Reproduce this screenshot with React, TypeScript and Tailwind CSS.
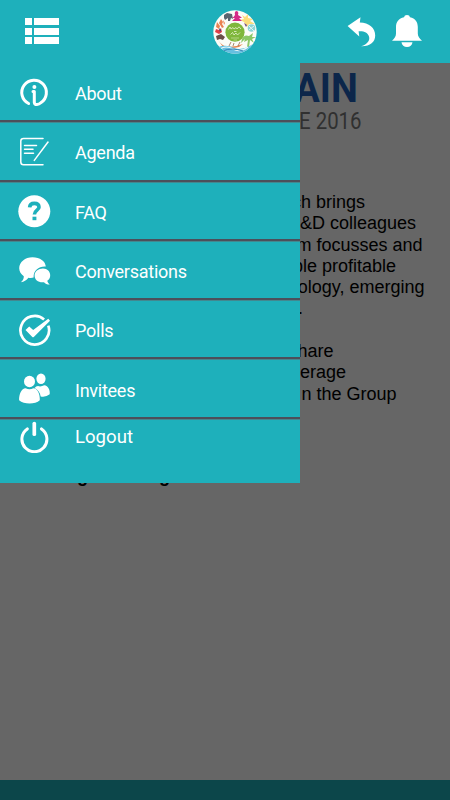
import type { ReactNode } from "react";

function Icon({ children }: { children: ReactNode }) {
  return (
    <svg viewBox="0 0 34 34" className="h-[34px] w-[34px] shrink-0 text-white" fill="currentColor" aria-hidden="true">
      {children}
    </svg>
  );
}

function AboutIcon() {
  return (
    <Icon>
      <path
        d="M11.6 27.5A12.3 12.3 0 1 1 23.8 26.8C21.8 28.8 17.8 29.7 17.3 26.5V15.4H16"
        fill="none"
        stroke="currentColor"
        strokeWidth="3"
        strokeLinecap="round"
        strokeLinejoin="round"
      />
      <circle cx="17.4" cy="11" r="2" />
    </Icon>
  );
}

function AgendaIcon() {
  return (
    <Icon>
      <g fill="none" stroke="currentColor" strokeWidth="1.5" strokeLinecap="round" strokeLinejoin="round">
        <path d="M26 3.4H6.5Q3.8 3.4 3.8 6.1V27Q3.8 29.8 6.5 29.8H26" />
        <path d="M7.5 10.4H19.5M7.5 14.3H16M7.5 18.2H16.5" />
        <path d="M31 7L17.3 25.4" />
      </g>
    </Icon>
  );
}

function FaqIcon() {
  return (
    <Icon>
      <circle cx="17.3" cy="17.2" r="16" />
      <path
        d="M12.6 13.3C12.8 10.2 15 9.4 17.3 9.4C20.2 9.4 22 10.8 22 13.2C22 16.2 17.4 16.2 17.4 20.5"
        fill="none"
        stroke="#1eb0bb"
        strokeWidth="3.6"
      />
      <rect x="15.5" y="22.7" width="3.9" height="3.5" fill="#1eb0bb" />
    </Icon>
  );
}

function ConversationsIcon() {
  return (
    <Icon>
      <path d="M15.5 3.2C23 3.2 28.4 7.2 28.8 12.5C22 12 16.4 16 16.6 23.6C14.8 24.3 12.8 24.1 11.4 23.8C9.5 26.5 7 27.8 3.8 28.2C5.9 26.4 6.9 24.5 6.8 22.2C4 20.4 2.2 17.6 2.2 14.3C2.2 8 8.2 3.2 15.5 3.2Z" />
      <path d="M26 14.4C30.4 14.4 33.2 17.4 33.2 21.2C33.2 23.7 32.2 25.6 30.3 26.8C30.5 28.4 31.5 29.5 32.8 30.6C30 30.5 28.2 29.5 27 28.2C21.6 28.9 17.6 26 17.6 21.5C17.6 17.4 21.2 14.4 26 14.4Z" />
    </Icon>
  );
}

function PollsIcon() {
  return (
    <Icon>
      <path
        d="M27.1 6.4A14.3 14.3 0 1 0 31.3 12.6"
        fill="none"
        stroke="currentColor"
        strokeWidth="2.7"
      />
      <path d="M8.5 16.9L12.2 13.5L16.2 16.9L31.3 5.7L33 7.8L16.8 23.9Q16 24.5 15.3 23.9Z" />
    </Icon>
  );
}

function InviteesIcon() {
  return (
    <Icon>
      <ellipse cx="24" cy="6.8" rx="4.6" ry="5.2" />
      <path d="M21 14.1Q24 15 27.2 13.3C31.3 13.8 33.3 18.4 32.7 22.2Q28.9 25.4 23.7 24.4C23.1 20.7 21 17.7 17.6 16C18.6 14.9 19.7 14.2 21 14.1Z" />
      <ellipse cx="12.5" cy="9.5" rx="5.5" ry="5.8" />
      <path d="M8.6 16.2Q12.5 18.3 16.4 16.2C20.6 16.5 23.1 21.7 22.8 28.2C18.2 32.6 7 32.6 2.1 28.2C2 21.7 4.5 16.5 8.6 16.2Z" />
    </Icon>
  );
}

function LogoutIcon() {
  return (
    <Icon>
      <g fill="none" stroke="currentColor" strokeLinecap="round">
        <path d="M10.3 9.9A12.5 12.5 0 1 0 24.5 9.9" strokeWidth="3" />
        <path d="M17.3 4.6V15.2" strokeWidth="3.7" />
      </g>
    </Icon>
  );
}

const menuItems = [
  { label: "About", icon: <AboutIcon /> },
  { label: "Agenda", icon: <AgendaIcon /> },
  { label: "FAQ", icon: <FaqIcon /> },
  { label: "Conversations", icon: <ConversationsIcon /> },
  { label: "Polls", icon: <PollsIcon /> },
  { label: "Invitees", icon: <InviteesIcon /> },
];

// `end` is the right edge of each line of copy
const lines = [
  { text: "ch brings", end: 365 },
  { text: "R&D colleagues", end: 416 },
  { text: "m focusses and", end: 422.5 },
  { text: "ble profitable", end: 396 },
  { text: "ology, emerging", end: 424.5 },
  { text: ".", end: 303 },
  { text: "", end: 300 },
  { text: "hare", end: 333.5 },
  { text: "erage", end: 346 },
  { text: "n the Group", end: 396.5 },
];

function Logo() {
  return (
    <svg viewBox="0 0 44 44" className="h-11 w-11" aria-hidden="true">
      <defs>
        <clipPath id="badge">
          <circle cx="22" cy="22" r="21.7" />
        </clipPath>
      </defs>
      <g clipPath="url(#badge)">
        <rect width="44" height="44" fill="#fbfcf7" />
        <path d="M29 5L32 7L35 4L35 8L40 9L37 11L42 14L36 14L34 17L31 12L27 10L31 9Z" fill="#fbdc7c" />
        <path d="M11 5L14 3L19 4L20 9L18 8L17 11L15 11L15 8L12 10L11 8Z" fill="#5a6570" />
        <path d="M19 8Q21 7 22 5Q21 1 24 1Q26 2 25 5Q27 6 29 8L26 8L29 11H19L22 8Z" fill="#d52a88" />
        <path d="M8 9L10 12L9 14L11 17L9 18L6 13ZM4 12L7 16L6 19L3 17ZM10 10L12 13L11 15Z" fill="#eb8251" />
        <path d="M3 19L6 20L8 18L9 22L6 24L2 22Z" fill="#df3f48" />
        <path d="M6 18L8 20L7 22Z" fill="#263e7d" />
        <path d="M3 26L8 24L12 27L10 30L7 29L4 30Z" fill="#694e47" />
        <path d="M31 13L34 15L33 17Z" fill="#6c4387" />
        <circle cx="38.5" cy="18" r="3.8" fill="#8dd4d6" />
        <path d="M36 16L41 21M36 20L41 16" stroke="#e2f6f4" />
        <path d="M29 29Q31 24 36 26L40 23L39 27L43 27L39 29L41 33L37 30L36 37H34L35 30L31 32L32 29L28 33Z" fill="#8bc766" />
        <path d="M5 30Q9 36 15 37Q23 37 30 34L26 37Q18 39 10 37Z" fill="#e48553" />
        <path d="M16 36L18 32M20 36L21 33M25 36L27 32" stroke="#93684a" strokeWidth=".8" />
        <path d="M5 37Q14 34 21 38Q29 41 40 34V44H5Z" fill="#66bfe0" />
        <path d="M7 39Q13 35 20 39T35 37" fill="none" stroke="#e9f8fa" strokeWidth="1.2" />
        <path d="M10 41Q18 37 30 41" fill="none" stroke="#3481b4" />
      </g>
      <circle cx="22" cy="22.2" r="9.6" fill="#7fb73b" />
      <g fill="none" stroke="#e7f2cf" strokeWidth=".8">
        <path d="M15.5 19.5L17 17L18 19L20 17.5L21 19L23 17.5L24 19L26 16.8L28 19M21 21.5H23.5M17.5 24.5L19.5 22.5L21 25L23 23L24.5 25L27 22.5" />
        <path d="M18 28H26M20.5 30H24" opacity=".6" />
      </g>
    </svg>
  );
}

export default function App() {
  return (
    <div className="flex h-[800px] w-[450px] flex-col overflow-hidden bg-[#666666] font-['Roboto',sans-serif]">
      <header className="flex h-[63px] shrink-0 items-center bg-[#1eb0bb] pl-[25px] pr-[27px]">
        <button type="button" aria-label="Menu" className="mb-px grid w-[34px] grid-cols-[7px_25px] gap-x-0.5 gap-y-[2.5px]">
          <span className="h-[7px] bg-white" />
          <span className="h-[7px] bg-white" />
          <span className="h-[7px] bg-white" />
          <span className="h-[7px] bg-white" />
          <span className="h-[7px] bg-white" />
          <span className="h-[7px] bg-white" />
        </button>
        <div className="ml-[154px]">
          <Logo />
        </div>
        <button type="button" aria-label="Back" className="ml-auto">
          <svg viewBox="0 0 30 32" className="h-8 w-[30px]" fill="#fff">
            <path d="M0.6 10L13.5 1.2L12.8 6.6C22 6.8 28.2 12 28.2 19.4C28.2 26 22.8 30.5 14.2 30.2C20.5 28 23.2 24.5 22 20.4C20.8 16.5 17 14.8 11.6 15.2L12.3 20.5Z" />
          </svg>
        </button>
        <button type="button" aria-label="Notifications" className="mb-0.5 ml-[14px]">
          <svg viewBox="0 0 32 34" className="h-[34px] w-8" fill="#fff">
            <path d="M13 3.2Q13.4 1 16 1T19 3.2C24.3 4.3 26.8 8 26.8 13V19.5C26.8 22.4 28.4 24.3 31 26.8H1C3.6 24.3 5 22.4 5 19.5V13C5 8 7.7 4.3 13 3.2Z" />
            <path d="M10.5 28.2H21.5C21.2 31 18.9 33 16 33S10.8 31 10.5 28.2Z" />
          </svg>
        </button>
      </header>

      <main className="relative flex-1 overflow-hidden">
        <div className="flex w-[358px] justify-end pt-[7px] text-[40px] font-bold leading-[38px] text-[#0c264a]">
          <span className="origin-right scale-x-[.95]">AIN</span>
        </div>
        <div className="flex w-[362px] justify-end">
          <span className="origin-right scale-x-[.85] text-[24px] leading-[27px] text-[#303030]">E 2016</span>
        </div>
        <div className="pt-[57px] font-['Liberation_Sans',sans-serif] text-[18px] leading-[21.3px] text-black">
          {lines.map((line) => (
            <p
              key={line.end + line.text}
              className="h-[21.3px] whitespace-nowrap text-right"
              style={{ width: line.end }}
            >
              {line.text}
            </p>
          ))}
        </div>
        <div className="flex gap-[71px] pl-[77px] pt-[60px] font-['Liberation_Sans',sans-serif] text-[18px] font-bold leading-[22px] text-black">
          <span>g</span>
          <span>g</span>
        </div>

        <nav className="absolute left-0 top-0 h-[420px] w-[300px] bg-[#1eb0bb] text-[18px] text-white">
          {menuItems.map((item) => (
            <div
              key={item.label}
              className="flex h-[59.3px] items-center gap-[24px] border-b-2 border-[#4c4f5a] pl-[17px] pt-[2px] shadow-[0_1px_0_#43878f]"
            >
              {item.icon}
              <span className="pt-[2px] tracking-[-0.25px]">{item.label}</span>
            </div>
          ))}
          <div className="flex gap-[24px] pl-[17px]">
            <LogoutIcon />
            <span className="pt-[5px] text-[18.6px]">Logout</span>
          </div>
        </nav>
      </main>

      <footer className="h-5 shrink-0 bg-[#0c464a]" />
    </div>
  );
}
